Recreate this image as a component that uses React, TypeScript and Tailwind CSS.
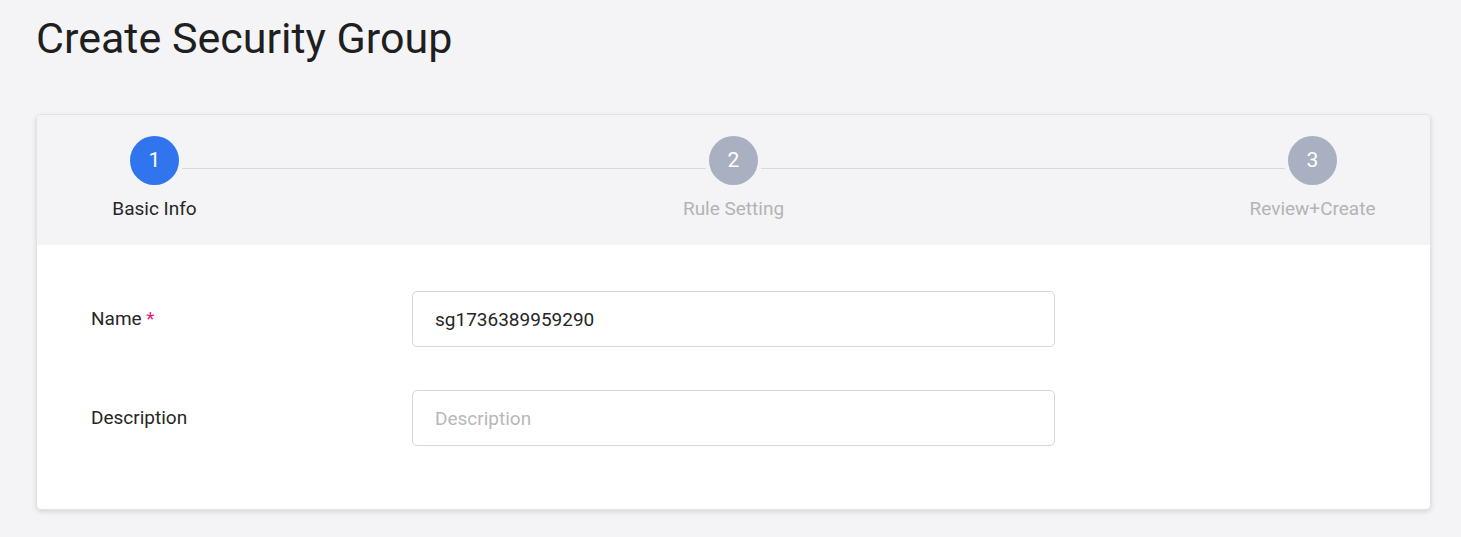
const steps = [
  { num: 1, label: "Basic Info", active: true },
  { num: 2, label: "Rule Setting", active: false },
  { num: 3, label: "Review+Create", active: false },
];

function Step({ num, label, active }: { num: number; label: string; active: boolean }) {
  return (
    <div className="flex w-[49px] shrink-0 flex-col items-center">
      <div
        className={`flex h-[49px] w-[49px] items-center justify-center rounded-full text-[21px] text-white ${
          active ? "bg-[#3175ee]" : "bg-[#a9b0c2]"
        }`}
      >
        {num}
      </div>
      <span
        className={`mt-[13px] whitespace-nowrap text-[19px] leading-[22px] ${
          active ? "text-[#262626]" : "text-[#b3b3b3]"
        }`}
      >
        {label}
      </span>
    </div>
  );
}

export default function App() {
  return (
    <div
      className="min-h-screen bg-[#f4f4f6] pb-7 pl-9 pr-[30px] pt-[17px]"
      style={{ fontFamily: "Roboto, 'Liberation Sans', sans-serif" }}
    >
      <h1 className="text-[43px] leading-[43px] text-[#1f1f1f]">Create Security Group</h1>

      <div className="mt-[54px] overflow-hidden rounded-[5px] border border-[#e2e2e4] bg-white shadow-[0_2px_5px_rgba(0,0,0,0.12)]">
        <div className="flex h-[130px] items-start bg-[#f4f4f6] px-[93px] pt-[21px]">
          {steps.map((step, i) => (
            <div key={step.num} className={`flex items-start ${i < steps.length - 1 ? "flex-1" : ""}`}>
              <Step {...step} />
              {i < steps.length - 1 ? (
                <div className="mx-[3px] mt-[32px] h-px flex-1 bg-[#d9d9db]" />
              ) : null}
            </div>
          ))}
        </div>

        <div className="flex flex-col gap-[43px] px-[54px] pb-[63px] pt-[46px] text-[19px]">
          <div className="flex items-center">
            <label className="w-[321px] shrink-0 text-[#262626]">
              Name <span className="text-[#e8196f]">*</span>
            </label>
            <input
              defaultValue="sg1736389959290"
              className="h-[56px] w-[643px] rounded-[5px] border border-[#d6d6d6] bg-white px-[22px] text-[19px] text-[#262626] outline-none"
            />
          </div>
          <div className="flex items-center">
            <label className="w-[321px] shrink-0 text-[#262626]">Description</label>
            <input
              placeholder="Description"
              className="h-[56px] w-[643px] rounded-[5px] border border-[#d6d6d6] bg-white px-[22px] text-[19px] text-[#262626] outline-none placeholder:text-[#b8b8b8]"
            />
          </div>
        </div>
      </div>
    </div>
  );
}
